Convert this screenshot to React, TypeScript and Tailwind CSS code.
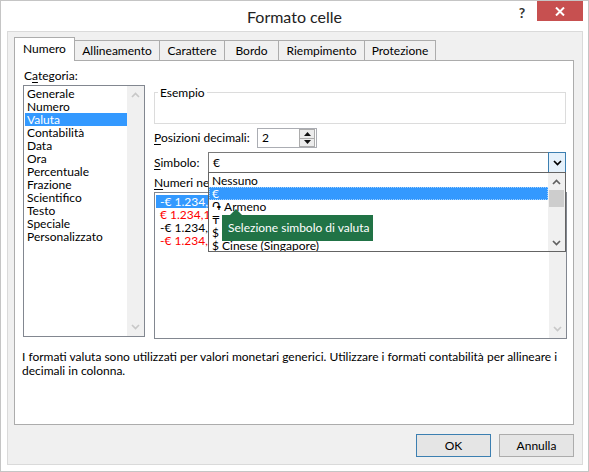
import React from 'react'

const CATEGORIES = [
  'Generale',
  'Numero',
  'Valuta',
  'Contabilità',
  'Data',
  'Ora',
  'Percentuale',
  'Frazione',
  'Scientifico',
  'Testo',
  'Speciale',
  'Personalizzato',
]

const NEGATIVES: Array<{ text: string; red: boolean }> = [
  { text: '-€ 1.234,10', red: false },
  { text: '€ 1.234,10', red: true },
  { text: '-€ 1.234,10', red: false },
  { text: '-€ 1.234,10', red: true },
]

const SYMBOLS = ['Nessuno', '€', '֏ Armeno', '₸ Kazako', '$ Canadese', '$ Cinese (Singapore)']

const TABS = [
  { label: 'Numero', w: 'w-[61px]' },
  { label: 'Allineamento', w: 'w-[86px]' },
  { label: 'Carattere', w: 'w-[66px]' },
  { label: 'Bordo', w: 'w-[55px]' },
  { label: 'Riempimento', w: 'w-[87px]' },
  { label: 'Protezione', w: 'w-[72px]' },
]

function Chevron({ dir, className }: { dir: 'up' | 'down'; className?: string }) {
  return (
    <svg width="9" height="6" viewBox="0 0 9 6" className={className}>
      <polyline
        points={dir === 'up' ? '1,5 4.5,1.5 8,5' : '1,1 4.5,4.5 8,1'}
        fill="none"
        stroke="currentColor"
        strokeWidth="1.7"
      />
    </svg>
  )
}

function DisabledScrollbar() {
  return (
    <div className="w-[17px] bg-[#f0f0f0] flex flex-col justify-between items-center py-[6px] text-[#c8c8c8]">
      <Chevron dir="up" />
      <Chevron dir="down" />
    </div>
  )
}

function TitleBar() {
  return (
    <div className="h-[30px] grid grid-cols-[1fr_auto_1fr]">
      <div />
      <div className="self-center pt-[2px] text-[16px] text-[#222]">Formato celle</div>
      <div className="flex justify-end items-start mr-[5px]">
        <div className="w-[30px] h-[22px] flex items-center justify-center text-[14px] font-bold text-[#333]">?</div>
        <div className="w-[46px] h-[20px] bg-[#c75050] flex items-center justify-center">
          <svg width="10" height="9" viewBox="0 0 10 9">
            <path d="M1 0.5 L9 8.5 M9 0.5 L1 8.5" stroke="white" strokeWidth="2" />
          </svg>
        </div>
      </div>
    </div>
  )
}

function Tabs() {
  return (
    <div className="h-[23px] flex items-end">
      {TABS.map((t, i) =>
        i === 0 ? (
          <div
            key={t.label}
            className={`${t.w} h-[24px] -mb-[1px] relative z-10 bg-white border border-b-0 border-[#acacac] flex items-center justify-center pb-[1px]`}
          >
            {t.label}
          </div>
        ) : (
          <div
            key={t.label}
            className={`${t.w} h-[20px] -ml-[1px] bg-[#f0f0f0] border border-b-0 border-[#acacac] flex items-center justify-center`}
          >
            {t.label}
          </div>
        ),
      )}
    </div>
  )
}

function CategoryList() {
  return (
    <div className="w-[122px] flex flex-col">
      <div className="h-[17px] leading-[15px] pl-[1px]">
        C<u className="underline-offset-2">a</u>tegoria:
      </div>
      <div className="h-[252px] border border-[#828790] bg-white flex">
        <div className="flex-1 pt-[1px] pl-[1px]">
          {CATEGORIES.map((c) => (
            <div
              key={c}
              className={c === 'Valuta' ? 'h-[13px] leading-[13px] pl-[2px] bg-[#3399ff] text-white' : 'h-[13px] leading-[13px] pl-[2px]'}
            >
              {c}
            </div>
          ))}
        </div>
        <DisabledScrollbar />
      </div>
    </div>
  )
}

function SpinBox() {
  return (
    <div className="w-[60px] h-[20px] border border-[#abadb3] bg-white flex">
      <div className="flex-1 pl-[4px] leading-[18px]">2</div>
      <div className="w-[16px] mr-[1px] flex flex-col">
        <div className="flex-1 border border-[#acacac] bg-[#ececec] flex items-center justify-center">
          <svg width="7" height="4" viewBox="0 0 7 4">
            <path d="M0 4 L3.5 0 L7 4 Z" fill="#111" />
          </svg>
        </div>
        <div className="flex-1 border border-t-0 border-[#acacac] bg-[#ececec] flex items-center justify-center">
          <svg width="7" height="4" viewBox="0 0 7 4">
            <path d="M0 0 L7 0 L3.5 4 Z" fill="#111" />
          </svg>
        </div>
      </div>
    </div>
  )
}

function SymbolDropdown() {
  return (
    <div className="absolute left-0 top-[20px] z-20 w-[358px] h-[80px] border border-[#646464] bg-white flex">
      <div className="flex-1 overflow-hidden pt-[1px]">
        {SYMBOLS.map((s) =>
          s === '€' ? (
            <div key={s} className="h-[13px] leading-[11px] pl-[2px] bg-[#3399ff] text-white border border-dotted border-[#9fd0ff]">
              {s}
            </div>
          ) : (
            <div key={s} className="h-[13px] leading-[13px] pl-[3px] whitespace-nowrap">
              {s}
            </div>
          ),
        )}
      </div>
      <div className="w-[17px] bg-[#f0f0f0] flex flex-col text-[#606060]">
        <div className="h-[17px] flex items-center justify-center">
          <Chevron dir="up" />
        </div>
        <div className="h-[17px] mx-[1px] bg-[#cdcdcd]" />
        <div className="flex-1" />
        <div className="h-[17px] flex items-center justify-center">
          <Chevron dir="down" />
        </div>
      </div>
      <div className="absolute left-[13px] top-[42px] w-[151px] h-[26px] bg-[#217346] text-white pl-[6px] leading-[26px] whitespace-nowrap">
        <div className="absolute -top-[6px] left-[8px] w-0 h-0 border-l-[6px] border-r-[6px] border-b-[6px] border-l-transparent border-r-transparent border-b-[#217346]" />
        Selezione simbolo di valuta
      </div>
    </div>
  )
}

function RightColumn() {
  return (
    <div className="w-[413px] flex flex-col">
      <fieldset className="mt-[17px] h-[39px] w-[412px] border border-[#dcdcdc]">
        <legend className="ml-[3px] px-[2px] leading-[15px]">Esempio</legend>
      </fieldset>

      <div className="mt-[4px] h-[20px] flex items-center">
        <div className="w-[103px] whitespace-nowrap">
          <u className="underline-offset-2">P</u>osizioni decimali:
        </div>
        <SpinBox />
      </div>

      <div className="mt-[4px] h-[21px] flex items-center">
        <div className="w-[54px] whitespace-nowrap">
          <u className="underline-offset-2">S</u>imbolo:
        </div>
        <div className="relative w-[358px] h-[21px] flex">
          <div className="flex-1 border border-r-0 border-[#7a7a7a] bg-white pl-[4px] leading-[19px]">€</div>
          <div className="w-[18px] border border-[#3c7fb1] bg-[#e5f1fb] flex items-center justify-center text-black">
            <Chevron dir="down" />
          </div>
          <SymbolDropdown />
        </div>
      </div>

      <div className="mt-[2px] h-[17px] leading-[15px] whitespace-nowrap">
        <u className="underline-offset-2">N</u>umeri negativi:
      </div>
      <div className="h-[147px] border border-[#828790] bg-white flex">
        <div className="flex-1 pt-[2px] pl-[1px]">
          {NEGATIVES.map((n, i) => (
            <div
              key={i}
              className={
                i === 0
                  ? 'h-[13px] leading-[13px] pl-[4px] bg-[#3399ff] text-white'
                  : n.red
                    ? 'h-[13px] leading-[13px] pl-[4px] text-[#ff0000]'
                    : 'h-[13px] leading-[13px] pl-[4px]'
              }
            >
              {n.text}
            </div>
          ))}
        </div>
        <DisabledScrollbar />
      </div>
    </div>
  )
}

export default function App() {
  return (
    <div className="w-[589px] h-[472px] border border-[#c5c5c5] bg-white flex flex-col font-['Lato','Noto_Sans',sans-serif] text-[12px] text-black">
      <TitleBar />
      <div className="flex-1 ml-[6px] mr-[5px] mb-[6px] border border-[#dadada] bg-[#f0f0f0] flex flex-col pl-[6px] pt-[5px] pb-[7px]">
        <Tabs />
        <div className="h-[365px] w-[560px] border border-[#acacac] bg-white flex flex-col">
          <div className="flex pt-[7px] pl-[8px] gap-[9px]">
            <CategoryList />
            <RightColumn />
          </div>
          <div className="mt-[11px] pl-[7px] leading-[14px] whitespace-nowrap">
            I formati valuta sono utilizzati per valori monetari generici. Utilizzare i formati contabilità per allineare i
            <br />
            decimali in colonna.
          </div>
        </div>
        <div className="mt-[9px] w-[560px] flex justify-end gap-[8px]">
          <div className="w-[75px] h-[23px] border border-[#3c7fb1] bg-[#e5e5e5] flex items-center justify-center">OK</div>
          <div className="w-[75px] h-[23px] border border-[#acacac] bg-[#e5e5e5] flex items-center justify-center">Annulla</div>
        </div>
      </div>
    </div>
  )
}
